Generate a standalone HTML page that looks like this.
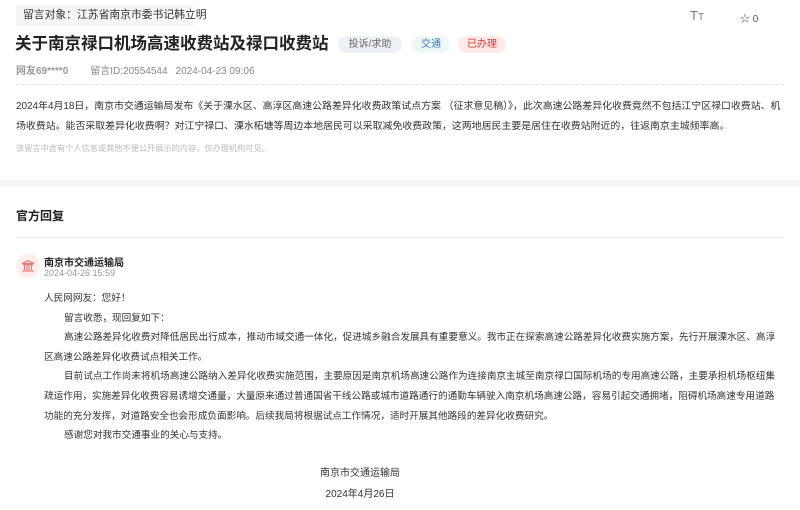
<!DOCTYPE html>
<html><head><meta charset="utf-8"><style>
*{margin:0;padding:0;box-sizing:border-box}
body{width:800px;height:510px;background:#fff;font-family:"Liberation Sans","Noto Sans CJK SC",sans-serif;color:#333;position:relative;overflow:hidden}
.a{position:absolute;white-space:nowrap}
.tag{position:absolute;height:17px;line-height:17px;border-radius:9px;font-size:10px;text-align:center;top:36px}
.p{font-size:10px;color:#333}
</style></head><body>
<div class="a" style="left:16px;top:5px;width:177px;height:21px;background:#f4f5f7;font-size:10.8px;line-height:21px;padding-left:7px;color:#333">留言对象：江苏省南京市委书记韩立明</div>
<div class="a" style="left:690px;top:8px;font-size:13px;color:#777">T<span style="font-size:10px">T</span></div>
<div class="a" style="left:740px;top:10px;font-size:10px;color:#555">☆ 0</div>
<div class="a" style="left:15px;top:33px;font-size:16.5px;font-weight:bold;color:#222;line-height:22px">关于南京禄口机场高速收费站及禄口收费站</div>
<div class="tag" style="left:338px;width:64px;background:#eef1f6;color:#666">投诉/求助</div>
<div class="tag" style="left:412px;width:38px;background:#eef8f8;color:#3a76c4">交通</div>
<div class="tag" style="left:458px;width:48px;background:#fdeaea;color:#d9342b">已办理</div>
<div class="a" style="left:16px;top:65px;font-size:10px;color:#888;line-height:14px"><b style="color:#999">网友69****0</b><span style="margin-left:22px">留言ID:20554544</span><span style="margin-left:8px">2024-04-23 09:06</span></div>
<div class="a" style="left:16px;top:84px;width:768px;border-top:1px dashed #e4e4e4"></div>
<div class="a p" style="left:16px;top:97px;line-height:20px;font-size:9.92px">2024年4月18日，南京市交通运输局发布《关于溧水区、高淳区高速公路差异化收费政策试点方案 （征求意见稿）》，此次高速公路差异化收费竟然不包括江宁区禄口收费站、机<br>场收费站。能否采取差异化收费啊？对江宁禄口、溧水柘塘等周边本地居民可以采取减免收费政策，这两地居民主要是居住在收费站附近的，往返南京主城频率高。</div>
<div class="a" style="left:16px;top:142px;font-size:8.2px;color:#bbb">该留言中含有个人信息或其他不便公开展示的内容，仅办理机构可见。</div>
<div class="a" style="left:0;top:180px;width:800px;height:7px;background:#f5f6f8"></div>
<div class="a" style="left:16px;top:207px;font-size:12px;font-weight:bold;color:#222">官方回复</div>
<div class="a" style="left:16px;top:237px;width:768px;border-top:1px solid #eaeaea"></div>
<div class="a" style="left:16px;top:254px;width:24px;height:24px;border-radius:50%;background:#fdeeee"></div>
<svg class="a" style="left:20px;top:258px" width="16" height="16" viewBox="0 0 16 16" fill="none" stroke="#e07a7a" stroke-width="1.2"><path d="M2 5.5L8 2.5 14 5.5Z M3 6.5h10 M4.5 7v5 M7 7v5 M9 7v5 M11.5 7v5 M2.5 13h11"/></svg>
<div class="a" style="left:44px;top:254px;font-size:10px;font-weight:bold;color:#222">南京市交通运输局</div>
<div class="a" style="left:44px;top:268px;font-size:9px;color:#999">2024-04-26 15:59</div>
<div class="a p" style="left:44px;top:289px;line-height:19.6px;font-size:9.62px">人民网网友：您好！<br>
<span style="padding-left:20px">留言收悉，现回复如下：</span><br>
<span style="padding-left:20px">高速公路差异化收费对降低居民出行成本，推动市域交通一体化，促进城乡融合发展具有重要意义。我市正在探索高速公路差异化收费实施方案，先行开展溧水区、高淳</span><br>
区高速公路差异化收费试点相关工作。<br>
<span style="padding-left:20px">目前试点工作尚未将机场高速公路纳入差异化收费实施范围，主要原因是南京机场高速公路作为连接南京主城至南京禄口国际机场的专用高速公路，主要承担机场枢纽集</span><br>
疏运作用，实施差异化收费容易诱增交通量，大量原来通过普通国省干线公路或城市道路通行的通勤车辆驶入南京机场高速公路，容易引起交通拥堵，阻碍机场高速专用道路<br>
功能的充分发挥，对道路安全也会形成负面影响。后续我局将根据试点工作情况，适时开展其他路段的差异化收费研究。<br>
<span style="padding-left:20px">感谢您对我市交通事业的关心与支持。</span></div>
<div class="a p" style="left:320px;top:463px;width:80px;text-align:center;line-height:21px">南京市交通运输局<br>2024年4月26日</div>
</body></html>
